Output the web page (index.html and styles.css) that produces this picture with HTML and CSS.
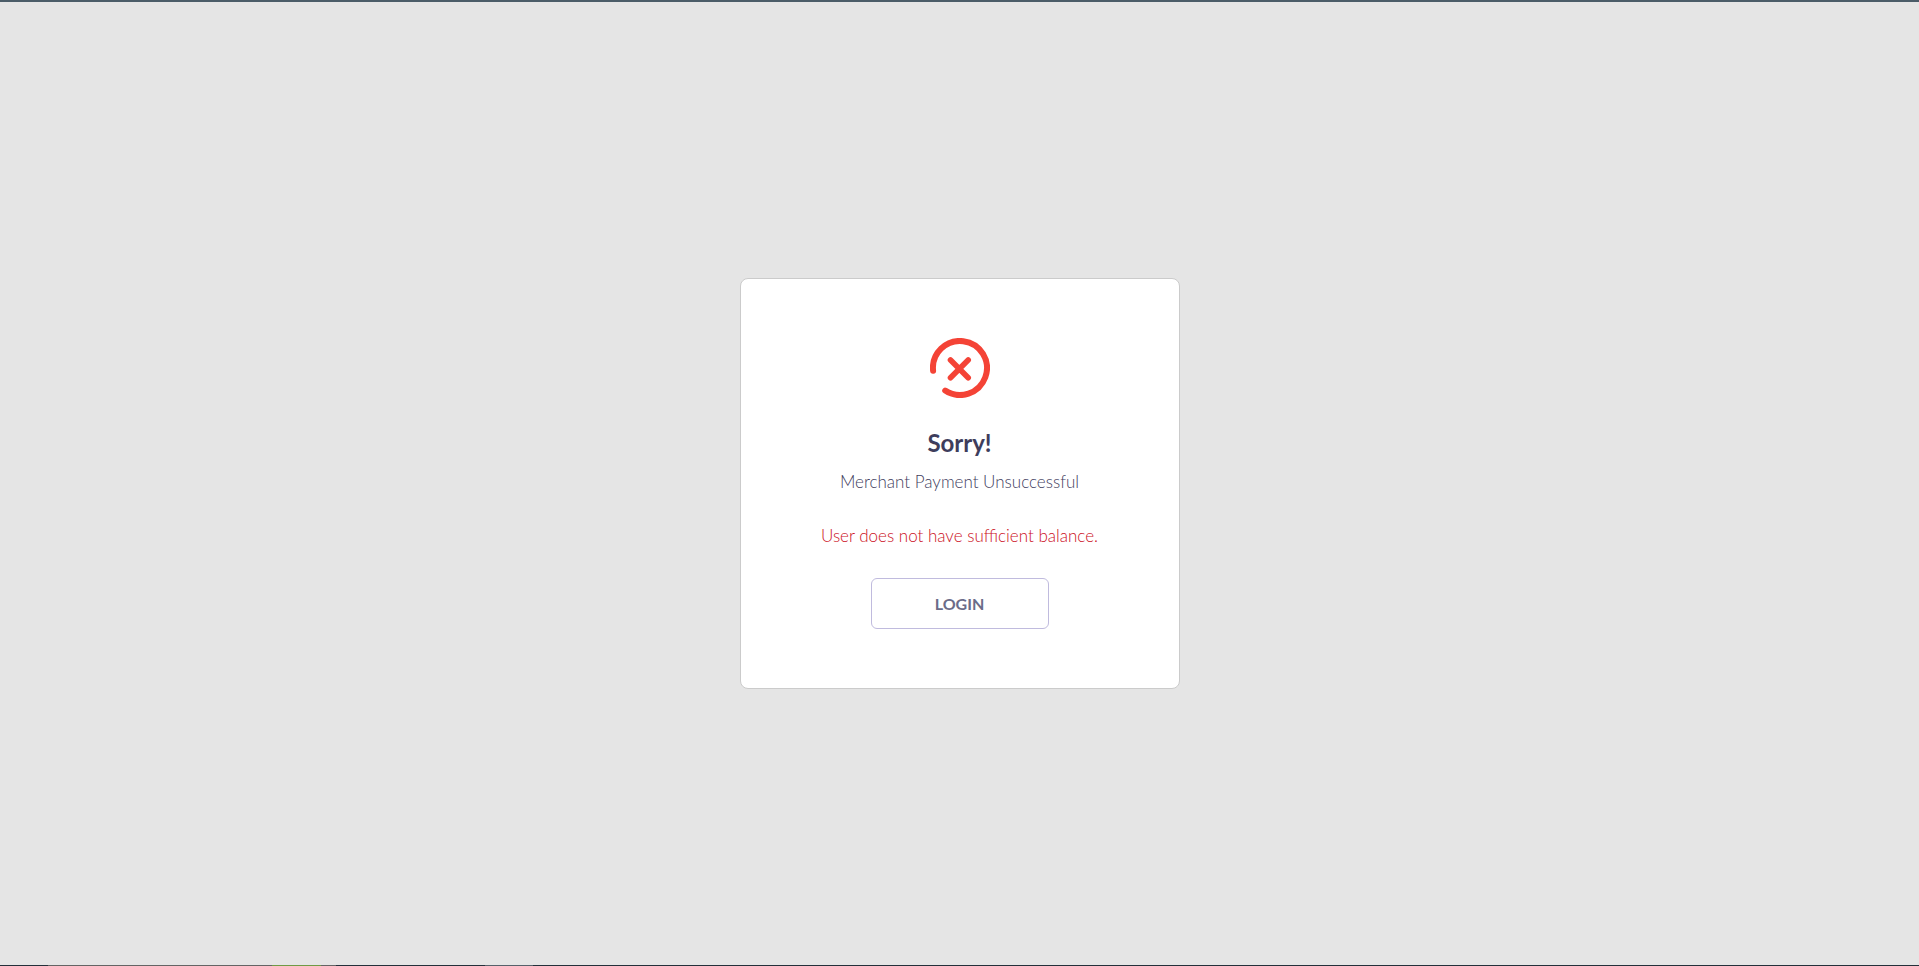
FILE: index.html
```html
<!DOCTYPE html>
<html lang="en">
<head>
<meta charset="utf-8">
<meta name="viewport" content="width=device-width, initial-scale=1">
<title>Payment Unsuccessful</title>
<link rel="stylesheet" href="styles.css">
</head>
<body class="page">
<main class="stage">
  <section class="card">
    <svg class="card-icon" viewBox="0 0 60 60" fill="none" stroke="#f44336" stroke-width="6" stroke-linecap="round" aria-hidden="true">
      <path d="M3.1 32.8A27 27 0 1 1 15.2 52.6"/>
      <path stroke-width="5.6" d="M20.5 22 38.2 39.7M38.2 22 20.5 39.7"/>
    </svg>
    <h1 class="card-title">Sorry!</h1>
    <p class="card-text">Merchant Payment Unsuccessful</p>
    <p class="card-error">User does not have sufficient balance.</p>
    <button class="card-button" type="button">LOGIN</button>
  </section>
</main>
<div class="taskbar"></div>
</body>
</html>
```
FILE: styles.css
```css
* {
  box-sizing: border-box;
}

.page {
  display: flex;
  flex-direction: column;
  min-height: 100vh;
  margin: 0;
  border-top: 2px solid #4b5c68;
  background: #e5e5e5;
  font-family: Lato, "Open Sans", sans-serif;
  font-size: 17px;
  font-weight: 300;
  line-height: 24px;
}

.stage {
  flex: 1;
  display: flex;
  align-items: center;
  justify-content: center;
}

.card {
  display: flex;
  flex-direction: column;
  align-items: center;
  width: 440px;
  max-width: 100%;
  padding: 59px 24px;
  border: 1px solid #cbcbcb;
  border-radius: 8px;
  background: #fff;
  text-align: center;
}

.card-icon {
  width: 60px;
  height: 60px;
}

.card-title {
  margin: 29px 0 11px;
  color: #3e3d5c;
  font-size: 24px;
  font-weight: 700;
  line-height: 32px;
}

.card-text {
  margin: 0 0 30px;
  color: #3f405e;
}

.card-error {
  margin: 0 0 30px;
  color: #cc1024;
}

.card-button {
  width: 178px;
  height: 51px;
  border: 1px solid #c0bbde;
  border-radius: 6px;
  background: #fff;
  color: #6b6c89;
  font: inherit;
  font-size: 16px;
  font-weight: 700;
}

.taskbar {
  height: 1px;
  background: linear-gradient(90deg, #23303a 48px, #646464 48px 272px, #6f9a45 272px 321px, #646464 321px 336px, #23303a 336px 485px, #56616a 485px 533px, #23303a 533px);
}
```
